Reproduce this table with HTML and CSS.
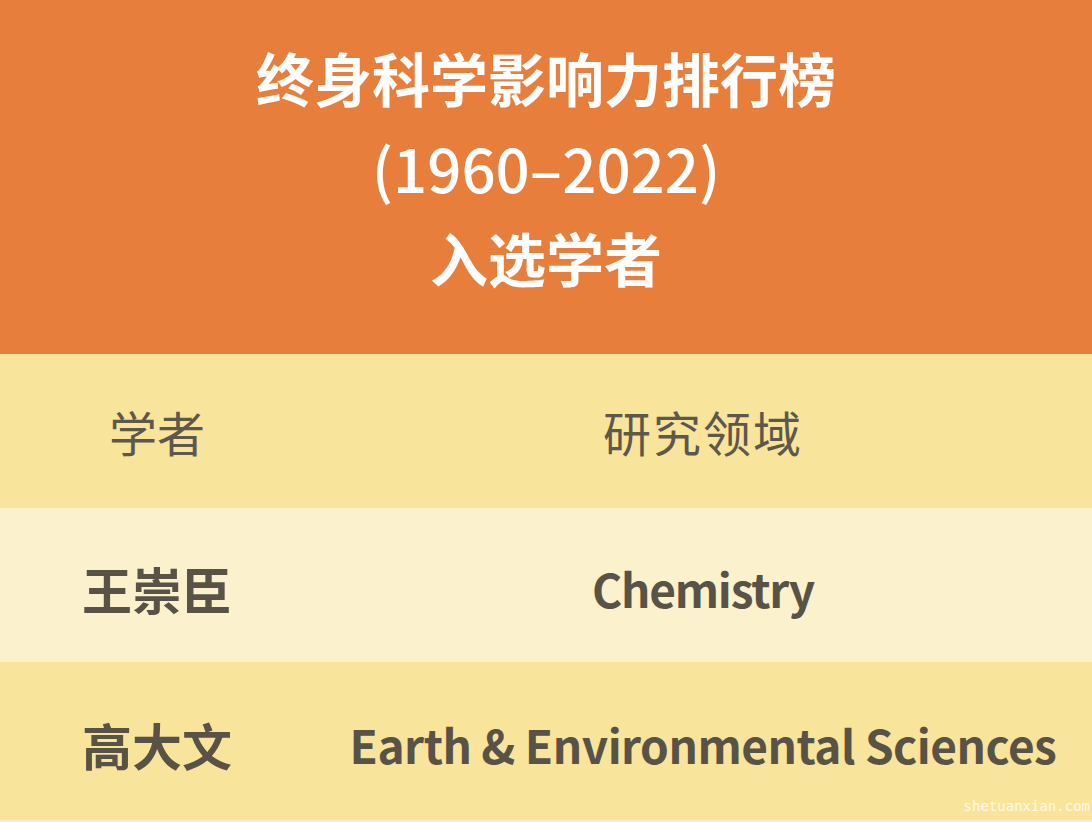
FILE: index.html
```html
<!DOCTYPE html>
<html lang="zh">
<head>
<meta charset="utf-8">
<link rel="stylesheet" href="styles.css">
</head>
<body>
<div class="page">
  <header class="banner">
    <div class="line">终身科学影响力排行榜</div>
    <div class="line year">(1960–2022)</div>
    <div class="line">入选学者</div>
  </header>
  <div class="row head">
    <div class="c1">学者</div>
    <div class="c2">研究领域</div>
  </div>
  <div class="row light">
    <div class="c1 b">王崇臣</div>
    <div class="c2 b chem">Chemistry</div>
  </div>
  <div class="row last">
    <div class="c1 b">高大文</div>
    <div class="c2 b">Earth &amp; Environmental Sciences</div>
    <span class="mark">shetuanxian.com</span>
  </div>
</div>
</body>
</html>
```
FILE: styles.css
```css
html, body { margin: 0; padding: 0; }
body { background: #fbf3d8; font-family: "Noto Sans CJK SC", "Noto Sans", sans-serif; }
.page { width: 1092px; height: 822px; overflow: hidden; }
.banner {
  height: 354px;
  background: #e77e3c;
  color: #fff;
  font-weight: 700;
  font-size: 58px;
  text-align: center;
  display: flex;
  flex-direction: column;
  align-items: center;
  padding-top: 32px;
  box-sizing: border-box;
}
.banner .line { height: 90px; line-height: 90px; }
.banner .year { font-weight: 500; font-size: 60px; }
.row {
  display: grid;
  grid-template-columns: 314px 1fr;
  align-items: center;
  height: 154px;
  background: #f9e49c;
  color: #595247;
  font-size: 50px;
  position: relative;
}
.row.head { font-size: 48px; }
.row.light { background: #fcf1cd; }
.row.last { height: 158px; border-bottom: 2px solid #fbeec4; }
.c1, .c2 { text-align: center; }
.head .c1, .head .c2 { color: #5e574b; }
.head .c2 { letter-spacing: 2px; }
.b { font-weight: 700; }
.row.light .c1, .row.light .c2 { padding-top: 6px; }
.row.last .c1, .row.last .c2 { padding-top: 6px; }
.c2.b { letter-spacing: -0.5px; font-size: 46px; }
.c2.chem { letter-spacing: -1.2px; }
.mark {
  position: absolute;
  right: 2px;
  bottom: 6px;
  font-family: "DejaVu Sans Mono", monospace;
  font-size: 14px;
  color: #fff9e6;
}
```
